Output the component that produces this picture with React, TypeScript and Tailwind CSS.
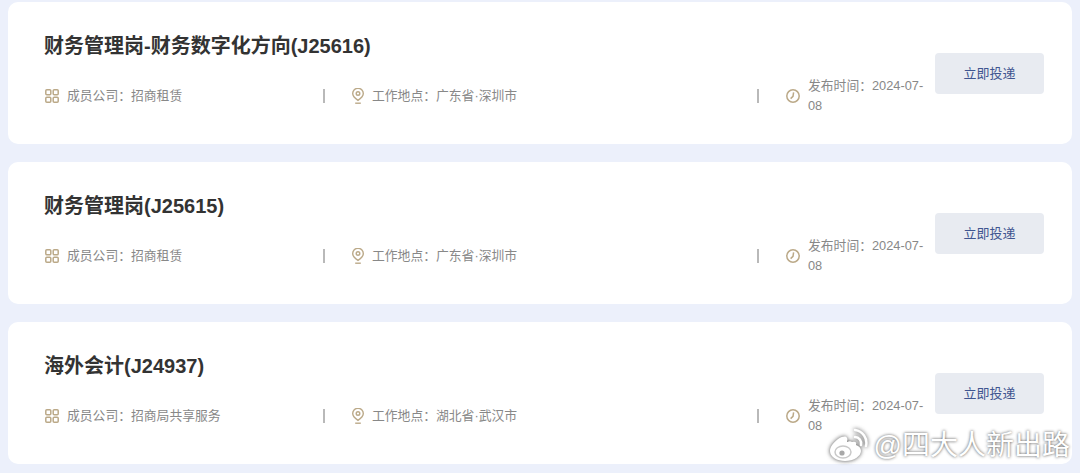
const FONT = "font-['Liberation_Sans','Noto_Sans_CJK_SC',sans-serif]";

interface Job {
  title: string;
  company: string;
  place: string;
}

const jobs: Job[] = [
  { title: "财务管理岗-财务数字化方向(J25616)", company: "招商租赁", place: "广东省·深圳市" },
  { title: "财务管理岗(J25615)", company: "招商租赁", place: "广东省·深圳市" },
  { title: "海外会计(J24937)", company: "招商局共享服务", place: "湖北省·武汉市" },
];

function GridIcon() {
  return (
    <svg width="14" height="14" viewBox="0 0 14 14" fill="none" stroke="#bba988" strokeWidth="1.5" className="shrink-0">
      <rect x="0.8" y="0.8" width="5" height="5" rx="1" />
      <rect x="8.2" y="0.8" width="5" height="5" rx="1" />
      <rect x="0.8" y="8.2" width="5" height="5" rx="1" />
      <rect x="8.2" y="8.2" width="5" height="5" rx="1" />
    </svg>
  );
}

function PinIcon() {
  return (
    <svg width="12" height="16" viewBox="0 0 12 16" fill="none" stroke="#bba988" strokeWidth="1.4" className="shrink-0">
      <path d="M6 12.4C3 10.4 0.7 8.2 0.7 5.6a5.3 5.3 0 0 1 10.6 0c0 2.6-2.3 4.8-5.3 6.8z" />
      <circle cx="6" cy="5.5" r="1.8" />
      <path d="M3.2 15.2h5.6" />
    </svg>
  );
}

function ClockIcon() {
  return (
    <svg width="14" height="14" viewBox="0 0 14 14" fill="none" stroke="#bba988" strokeWidth="1.5" className="shrink-0">
      <circle cx="7" cy="7" r="6.2" />
      <path d="M7.6 3.4 7 7.4 4.6 9.6" />
    </svg>
  );
}

function WeiboIcon() {
  return (
    <svg width="40" height="36" viewBox="0 0 40 36" fill="none" className="drop-shadow-[0_0_2px_rgba(60,60,60,0.9)]">
      <path
        d="M24 14c3-1 5 0 4 3 3 1 5 3 5 6 0 5-7 10-16 10C9 33 2 29 2 23c0-4 3-8 8-12 5-3 8-3 9-1 1 1 0 3 0 4 2-1 4-1 5 0z"
        fill="#fff"
      />
      <ellipse cx="15" cy="24" rx="8" ry="6" fill="#fff" stroke="#c9c9c9" strokeWidth="1.5" />
      <circle cx="14" cy="25" r="2.6" fill="#a8a8a8" />
      <path d="M27 9a6.5 6.5 0 0 1 6 8" stroke="#fff" strokeWidth="2.5" strokeLinecap="round" />
      <path d="M27 2a13 13 0 0 1 11 16" stroke="#fff" strokeWidth="2.5" strokeLinecap="round" />
    </svg>
  );
}

function Separator() {
  return <div className="h-[14px] w-[2px] shrink-0 bg-[#b9b9b9]" />;
}

function JobCard({ job }: { job: Job }) {
  return (
    <div className="flex h-[142px] items-start rounded-[10px] bg-white pl-[37px] pr-[28px]">
      <div className="min-w-0 flex-1">
        <h3 className="mt-[31px] -ml-[1px] h-[26px] text-[20px] leading-[26px] font-bold text-[#333]">{job.title}</h3>
        <div className="mt-[14px] flex h-[46px] items-center text-[12.8px] leading-[20px] text-[#888]">
          <div className="flex w-[278px] shrink-0 items-center gap-[8px]">
            <GridIcon />
            <span>成员公司：{job.company}</span>
          </div>
          <Separator />
          <div className="ml-[27px] flex w-[405px] shrink-0 items-center gap-[8px]">
            <PinIcon />
            <span>工作地点：{job.place}</span>
          </div>
          <Separator />
          <div className="ml-[27px] flex items-center gap-[8px]">
            <ClockIcon />
            <span className="w-[118px]">发布时间：2024-07-08</span>
          </div>
        </div>
      </div>
      <button className="mt-[51px] h-[41px] w-[109px] shrink-0 rounded-[4px] bg-[#e8ebf1] text-[13px] text-[#3f5590]">
        立即投递
      </button>
    </div>
  );
}

export default function App() {
  return (
    <div className={`${FONT} relative h-[473px] w-[1080px] overflow-hidden bg-[#ecf0fb] pl-[8px] pr-[8px] pt-[2px]`}>
      <div className="flex flex-col gap-[18px]">
        {jobs.map((job) => (
          <JobCard key={job.title} job={job} />
        ))}
      </div>
      <div className="absolute right-[10px] bottom-[9px] flex items-center gap-[6px]">
        <WeiboIcon />
        <span className="text-[28px] leading-[34px] text-white [text-shadow:0_0_3px_rgba(50,50,50,0.9)]">@四大人新出路</span>
      </div>
    </div>
  );
}
